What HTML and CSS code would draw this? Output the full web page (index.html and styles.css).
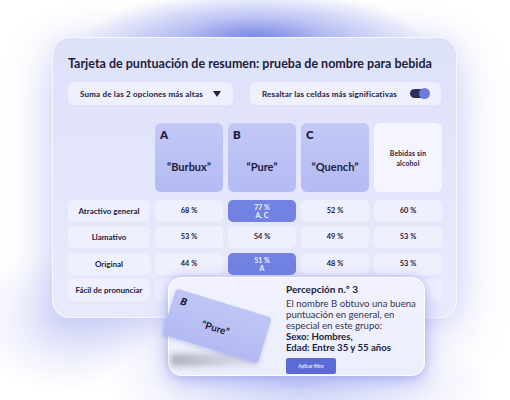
FILE: index.html
```html
<!DOCTYPE html>
<html lang="es">
<head>
<meta charset="utf-8">
<title>Tarjeta de puntuación</title>
<link rel="stylesheet" href="styles.css">
</head>
<body>
<div class="stage">
  <section class="panel">
    <h1 class="title">Tarjeta de puntuación de resumen: prueba de nombre para bebida</h1>
    <div class="controls">
      <div class="select">
        <span>Suma de las 2 opciones más altas</span>
        <span class="caret"></span>
      </div>
      <div class="toggle-box">
        <span>Resaltar las celdas más significativas</span>
        <span class="switch"><span class="knob"></span></span>
      </div>
    </div>
    <div class="grid">
      <div class="corner"></div>
      <div class="head lav"><span class="letter">A</span><span class="name">“Burbux”</span></div>
      <div class="head lav"><span class="letter">B</span><span class="name">“Pure”</span></div>
      <div class="head lav"><span class="letter">C</span><span class="name">“Quench”</span></div>
      <div class="head plain">Bebidas sin<br>alcohol</div>

      <div class="label">Atractivo general</div>
      <div class="cell">68 %</div>
      <div class="cell hi">77 %<br>A, C</div>
      <div class="cell">52 %</div>
      <div class="cell">60 %</div>

      <div class="label">Llamativo</div>
      <div class="cell">53 %</div>
      <div class="cell">54 %</div>
      <div class="cell">49 %</div>
      <div class="cell">53 %</div>

      <div class="label">Original</div>
      <div class="cell">44 %</div>
      <div class="cell hi">51 %<br>A</div>
      <div class="cell">48 %</div>
      <div class="cell">53 %</div>

      <div class="label">Fácil de pronunciar</div>
      <div class="cell"></div>
      <div class="cell"></div>
      <div class="cell"></div>
      <div class="cell"></div>
    </div>
  </section>

  <aside class="insight">
    <div class="floor"></div>
    <div class="mini">
      <span class="mini-letter">B</span>
      <span class="mini-name">“Pure”</span>
    </div>
    <div class="insight-text">
      <h2 class="insight-title">Percepción n.º 3</h2>
      <p class="insight-body">El nombre B obtuvo una buena puntuación en general, en especial en este grupo:<br><b>Sexo: Hombres,<br>Edad: Entre 35 y 55 años</b></p>
      <button class="apply">Aplicar filtro</button>
    </div>
  </aside>
</div>
</body>
</html>
```
FILE: styles.css
```css
* { box-sizing: border-box; }
html, body { margin: 0; padding: 0; }
body {
  width: 510px;
  height: 400px;
  overflow: hidden;
  font-family: Lato, "Liberation Sans", sans-serif;
  color: #1d2042;
  background:
    radial-gradient(ellipse 170px 50px at 255px 40px, rgba(105,120,228,0.95), rgba(140,152,236,0.55) 45%, rgba(255,255,255,0) 100%),
    radial-gradient(ellipse 190px 70px at 300px 385px, rgba(150,160,240,0.45), rgba(255,255,255,0) 100%),
    radial-gradient(ellipse 90px 70px at 60px 320px, rgba(180,186,245,0.35), rgba(255,255,255,0) 100%),
    #ffffff;
}
.stage {
  position: relative;
  padding: 37px 0 0 52px;
}
.panel {
  width: 405px;
  padding: 18px 15px 16px 15px;
  border-radius: 18px;
  background: linear-gradient(180deg, #dde1fa 0%, #e4e6fb 55%, #e8eafc 100%);
  border: 1px solid rgba(255,255,255,0.7);
  box-shadow: 0 18px 50px rgba(120,130,230,0.30), 0 0 30px rgba(160,168,240,0.25);
}
.title {
  margin: 0;
  font-size: 12.5px;
  line-height: 16px;
  font-weight: 700;
  color: #1b1e3c;
  white-space: nowrap;
}
.controls {
  display: flex;
  justify-content: space-between;
  margin-top: 10px;
  height: 23px;
}
.select, .toggle-box {
  display: flex;
  align-items: center;
  justify-content: space-between;
  background: #eef0fd;
  border-radius: 6px;
  font-size: 8px;
  letter-spacing: 0.18px;
  font-weight: 700;
  color: #1d2042;
  white-space: nowrap;
}
.select { width: 165px; padding: 0 12px 0 12px; }
.toggle-box { width: 191px; padding: 0 12px 0 12px; }
.caret {
  width: 0; height: 0;
  border-left: 4.5px solid transparent;
  border-right: 4.5px solid transparent;
  border-top: 6px solid #1d2042;
}
.switch {
  display: flex;
  align-items: center;
  justify-content: flex-end;
  width: 19px;
  height: 9px;
  border-radius: 5px;
  background: #2c3058;
}
.knob {
  width: 11px;
  height: 11px;
  border-radius: 50%;
  background: #6b7be2;
  margin-right: -1px;
}
.grid {
  display: grid;
  grid-template-columns: 82px repeat(4, 68px);
  grid-template-rows: 72px repeat(4, 22px);
  column-gap: 5px;
  row-gap: 4.5px;
  margin-top: 18px;
}
.head { margin-bottom: 3px; border-radius: 6px; }
.head.lav {
  position: relative;
  display: flex;
  align-items: center;
  justify-content: center;
  background: linear-gradient(180deg, #c3c8f6 0%, #b4bbf3 100%);
}
.letter {
  position: absolute;
  left: 5px;
  top: 6px;
  font-size: 11.5px;
  font-weight: 800;
  line-height: 11px;
}
.name {
  margin-top: 17px;
  font-size: 11px;
  font-weight: 700;
}
.head.plain {
  display: flex;
  align-items: center;
  justify-content: center;
  text-align: center;
  background: #f4f5fe;
  font-size: 6.8px;
  letter-spacing: 0.2px;
  font-weight: 700;
  line-height: 10px;
}
.label, .cell {
  display: flex;
  align-items: center;
  justify-content: center;
  text-align: center;
  background: #eff0fd;
  border-radius: 5px;
  font-size: 7.4px;
  font-weight: 700;
  line-height: 8px;
}
.label { font-size: 8px; }
.cell.hi {
  background: #7182e2;
  color: #f3f4ff;
  font-size: 7px;
  line-height: 8px;
}
.insight {
  position: absolute;
  left: 168px;
  top: 277px;
  width: 257px;
  height: 99px;
  border-radius: 14px;
  background: linear-gradient(180deg, #f1f2fd 0%, #eceefc 100%);
  border: 1px solid rgba(255,255,255,0.9);
  box-shadow: 0 6px 18px rgba(100,112,225,0.35), 0 0 8px rgba(130,140,235,0.35);
}
.floor {
  position: absolute;
  left: 2px;
  top: 76px;
  width: 88px;
  height: 12px;
  background: linear-gradient(90deg, rgba(130,130,140,0.6), rgba(180,180,190,0.15));
  filter: blur(3px);
}
.mini {
  position: absolute;
  left: -2px;
  top: 24px;
  width: 100px;
  height: 48px;
  border-radius: 4px;
  background: linear-gradient(180deg, #bfc6f6 0%, #b3baf3 100%);
  transform: rotate(17deg);
  box-shadow: 0 2px 4px rgba(90,100,200,0.25);
}
.mini-letter {
  position: absolute;
  left: 8px;
  top: 4px;
  font-size: 10px;
  font-weight: 800;
  font-style: italic;
}
.mini-name {
  position: absolute;
  left: 35px;
  top: 20px;
  font-size: 10px;
  font-weight: 700;
}
.insight-text {
  margin-left: 117px;
  padding-top: 5px;
}
.insight-title {
  margin: 0;
  font-size: 10px;
  line-height: 13px;
  font-weight: 700;
  color: #1b1e3c;
}
.insight-body {
  margin: 2px 0 0 0;
  font-size: 9.6px;
  line-height: 11px;
  color: #33364f;
}
.insight-body b { color: #1b1e3c; }
.apply {
  display: block;
  margin-top: 5px;
  width: 50px;
  height: 16px;
  padding: 0;
  border: 0;
  border-radius: 2px;
  background: #5b6bd6;
  color: #e9ebff;
  font-family: inherit;
  font-size: 4.6px;
  font-weight: 700;
}
```
